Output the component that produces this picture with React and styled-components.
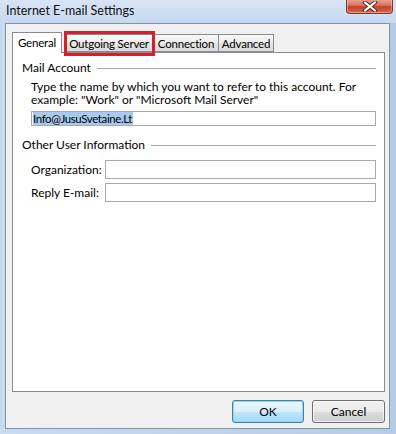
import React from 'react';
import styled, {createGlobalStyle} from 'styled-components';

const GlobalStyle = createGlobalStyle`
    html, body {
        margin: 0;
        padding: 0;
        background: #c3d6ec;
    }
    * {
        box-sizing: border-box;
    }
`;

export default function App() {
    return (
        <>
            <GlobalStyle />
            <Window>
                <TitleBar>
                    <Title>Internet E-mail Settings</Title>
                    <CloseButton>
                        <svg width="16" height="11" viewBox="0 0 16 11">
                            <path d="M3 1.5 L13 9.5 M13 1.5 L3 9.5" stroke="#5a2a24" strokeWidth="4" strokeLinecap="square" />
                            <path d="M3 1.5 L13 9.5 M13 1.5 L3 9.5" stroke="#ffffff" strokeWidth="2" strokeLinecap="square" />
                        </svg>
                    </CloseButton>
                </TitleBar>
                <Client>
                    <TabStrip>
                        <Tab $active $w={50}>General</Tab>
                        <Marked>
                            <Tab $w={90}>Outgoing Server</Tab>
                        </Marked>
                        <Tab $w={66}>Connection</Tab>
                        <Tab $w={56}>Advanced</Tab>
                    </TabStrip>
                    <Panel>
                        <GroupHeading>
                            <span>Mail Account</span>
                            <Rule />
                        </GroupHeading>
                        <Indented>
                            <Description>
                                <Line>Type the name by which you want to refer to this account. For</Line>
                                <Line>example: "Work" or "Microsoft Mail Server"</Line>
                            </Description>
                            <TextBox $h={18}>
                                <Selected>Info@JusuSvetaine.Lt</Selected>
                            </TextBox>
                        </Indented>
                        <GroupHeading $top={12}>
                            <span>Other User Information</span>
                            <Rule />
                        </GroupHeading>
                        <Indented>
                            <FieldRow>
                                <Label>Organization:</Label>
                                <TextBox $h={19} />
                            </FieldRow>
                            <FieldRow>
                                <Label>Reply E-mail:</Label>
                                <TextBox $h={19} />
                            </FieldRow>
                        </Indented>
                    </Panel>
                    <ButtonRow>
                        <Button $default $w={72}>OK</Button>
                        <Button $w={73}>Cancel</Button>
                    </ButtonRow>
                </Client>
            </Window>
        </>
    );
}

const Window = styled.div`
    width: 396px;
    height: 434px;
    display: flex;
    flex-direction: column;
    background: linear-gradient(to right, #c9dbef 0%, #bcd1ea 60%, #b6cce6 100%);
    font-family: Lato, "Segoe UI", sans-serif;
    font-size: 12px;
    color: #000;
`;

const TitleBar = styled.div`
    height: 23px;
    display: flex;
    justify-content: space-between;
    align-items: flex-start;
    padding: 0 3px 0 6px;
    background: linear-gradient(to bottom, #d7e5f5, #c6d9ef);
`;

const Title = styled.div`
    font-size: 12.5px;
    line-height: 22px;
    color: #111;
`;

const CloseButton = styled.div`
    width: 47px;
    height: 15px;
    margin-top: -1px;
    display: flex;
    align-items: center;
    justify-content: center;
    border: 1px solid #7a3a2e;
    border-top: none;
    border-radius: 0 0 4px 4px;
    background: linear-gradient(to bottom, #e9a99a 0%, #d9735d 45%, #c8412a 55%, #d06a4c 100%);
    box-shadow: inset 0 0 0 1px rgba(255, 255, 255, 0.35);
`;

const Client = styled.div`
    flex: 1;
    margin: 0 6px 5px 5px;
    border: 1px solid #8193aa;
    background: #f0f0f0;
    padding: 8px 4px 0 6px;
    display: flex;
    flex-direction: column;
`;

const TabStrip = styled.div`
    display: flex;
    align-items: flex-end;
    height: 20px;
    position: relative;
    z-index: 1;
`;

const Tab = styled.div`
    width: ${p => p.$w}px;
    flex-shrink: 0;
    height: ${p => (p.$active ? 21 : 18)}px;
    margin-right: ${p => (p.$active ? 2 : 0)}px;
    margin-bottom: ${p => (p.$active ? -1 : 0)}px;
    margin-left: ${p => (p.$active ? 0 : -1)}px;
    display: flex;
    justify-content: center;
    align-items: center;
    padding-bottom: ${p => (p.$active ? 2 : 0)}px;
    font-size: 11.5px;
    letter-spacing: -0.2px;
    border: 1px solid #898c95;
    border-bottom: ${p => (p.$active ? 'none' : '1px solid #898c95')};
    background: ${p => (p.$active ? '#fff' : 'linear-gradient(to bottom, #f7f7f7 0%, #eeeeee 50%, #e4e4e4 51%, #dcdcdc 100%)')};
    white-space: nowrap;
`;

const Marked = styled.div`
    position: relative;
    margin-left: 1px;
    &::after {
        content: '';
        position: absolute;
        left: -1px;
        right: -1px;
        top: -3px;
        bottom: -4px;
        border: 3px solid #d4202c;
        pointer-events: none;
    }
`;

const Panel = styled.div`
    width: 373px;
    height: 340px;
    border: 1px solid #898c95;
    background: #fff;
    padding: 8px 8px 0 9px;
`;

const GroupHeading = styled.div`
    display: flex;
    align-items: center;
    gap: 6px;
    margin-top: ${p => p.$top || 0}px;
    line-height: 14px;
    white-space: nowrap;
`;

const Rule = styled.div`
    flex: 1;
    height: 1px;
    background: #a8a8a8;
    margin-top: 1px;
`;

const Indented = styled.div`
    padding: 0 0 0 9px;
    display: flex;
    flex-direction: column;
    gap: 4px;
`;

const Description = styled.div`
    margin-top: 5px;
    margin-bottom: 1px;
    display: flex;
    flex-direction: column;
`;

const Line = styled.div`
    height: 13px;
    line-height: 13px;
    white-space: nowrap;
`;

const TextBox = styled.div`
    flex: 1;
    height: ${p => p.$h}px;
    border: 1px solid #a9a9a9;
    background: #fff;
    padding: 0 1px;
    display: flex;
    align-items: center;
`;

const Selected = styled.span`
    background: #a7cbf0;
    line-height: 13px;
    font-size: 11.5px;
    letter-spacing: -0.4px;
    padding-right: 1px;
`;

const FieldRow = styled.div`
    display: flex;
    align-items: center;
    &:first-child {
        margin-top: 8px;
    }
`;

const Label = styled.div`
    width: 74px;
`;

const ButtonRow = styled.div`
    display: flex;
    justify-content: flex-end;
    gap: 8px;
    margin-top: 8px;
`;

const Button = styled.div`
    width: ${p => p.$w}px;
    height: 23px;
    display: flex;
    align-items: center;
    justify-content: center;
    border: 1px solid ${p => (p.$default ? '#3c7fb1' : '#707070')};
    border-radius: 3px;
    background: ${p => (p.$default
        ? 'linear-gradient(to bottom, #eaf6fd 0%, #d9f0fc 50%, #bee6fd 51%, #a7d9f5 100%)'
        : 'linear-gradient(to bottom, #f2f2f2 0%, #ebebeb 50%, #dddddd 51%, #cfcfcf 100%)')};
    box-shadow: inset 0 0 0 1px ${p => (p.$default ? '#94d4f6' : 'rgba(255,255,255,0.7)')};
`;
